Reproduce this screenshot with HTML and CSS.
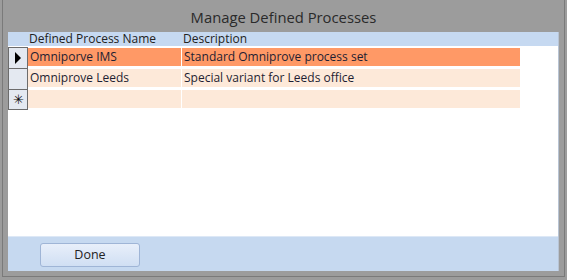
FILE: index.html
```html
<!DOCTYPE html>
<html lang="en">
<head>
  <meta charset="UTF-8" />
  <title>Manage Defined Processes</title>
  <link rel="stylesheet" href="styles.css">
</head>
<body>
  <div class="window">
    <div class="title">Manage Defined Processes</div>

    <div class="panel">
      <div class="sheet">
        <div class="head">
          <div class="corner"></div>
          <div class="hcell name-col">Defined Process Name</div>
          <div class="hcell">Description</div>
        </div>

        <div class="row current">
          <div class="selector">
            <svg width="8" height="12" viewBox="0 0 8 12"><path d="M1 0 L7 6 L1 12 Z" fill="#000"/></svg>
          </div>
          <div class="cell name-col">Omniporve IMS</div>
          <div class="cell desc-col">Standard Omniprove process set</div>
        </div>

        <div class="row">
          <div class="selector"></div>
          <div class="cell name-col">Omniprove Leeds</div>
          <div class="cell desc-col">Special variant for Leeds office</div>
        </div>

        <div class="row new-row">
          <div class="selector star">✳</div>
          <div class="cell name-col"></div>
          <div class="cell desc-col"></div>
        </div>
      </div>

      <div class="footer">
        <button class="done-btn">Done</button>
      </div>
    </div>
  </div>
</body>
</html>
```

FILE: styles.css
```css
body {
  margin: 0;
  width: 567px;
  height: 280px;
  background: #9c9c9c;
  font-family: 'Open Sans', 'Noto Sans', sans-serif;
  overflow: hidden;
}

.window {
  box-sizing: border-box;
  width: 563px;
  height: 277px;
  margin: 0 0 0 2px;
  border-left: 1px solid #7a7a7a;
  border-right: 1px solid #7a7a7a;
  border-bottom: 1px solid #7a7a7a;
  display: flex;
  flex-direction: column;
}

.title {
  height: 32px;
  line-height: 34px;
  text-align: center;
  font-size: 14.8px;
  color: #2a2a2a;
}

.panel {
  margin: 0 5px;
  height: 239px;
  display: flex;
  flex-direction: column;
  border-right: 1px solid #b8c4d4;
}

.sheet {
  flex: 1;
  background: #fff;
}

.head {
  height: 14px;
  background: #c6d9f1;
  display: flex;
  font-size: 12px;
  line-height: 14px;
  color: #222;
}

.corner {
  width: 20px;
}

.hcell {
  padding-left: 1px;
  white-space: nowrap;
}

.name-col {
  width: 153px;
  padding-left: 1px;
}

.row {
  display: flex;
  height: 21px;
  width: 512px;
}

.head + .row {
  margin-top: 1px;
}

.selector {
  box-sizing: border-box;
  width: 20px;
  height: 21px;
  background: #e4e9f1;
  border-left: 1px solid #6c6c6c;
  border-top: 1px solid #6c6c6c;
  border-right: 1px solid #6c6c6c;
  display: flex;
  align-items: center;
  justify-content: center;
}

.new-row .selector {
  border-bottom: 1px solid #6c6c6c;
}

.star {
  font-size: 13px;
  color: #111;
  line-height: 1;
}

.cell {
  box-sizing: border-box;
  height: 18px;
  margin-top: 1px;
  background: #fde9d9;
  font-size: 12px;
  line-height: 18px;
  color: #1e1e32;
  white-space: nowrap;
  overflow: hidden;
}

.cell.name-col {
  width: 154px;
  border-right: 1px solid #fff;
  padding-left: 2px;
}

.desc-col {
  flex: 1;
  padding-left: 2px;
}

.current .cell {
  background: #ff9966;
}

.footer {
  height: 35px;
  background: #c6d9f0;
  border-top: 1px solid #dde8f6;
  box-sizing: border-box;
  padding: 5px 0 0 32px;
}

.done-btn {
  width: 100px;
  height: 24px;
  border: 1px solid #9fb5d6;
  border-radius: 3px;
  background: linear-gradient(#e8effa, #d0dff3);
  font-family: 'Open Sans', 'Noto Sans', sans-serif;
  font-size: 12.5px;
  color: #222;
  padding: 0;
}
```
